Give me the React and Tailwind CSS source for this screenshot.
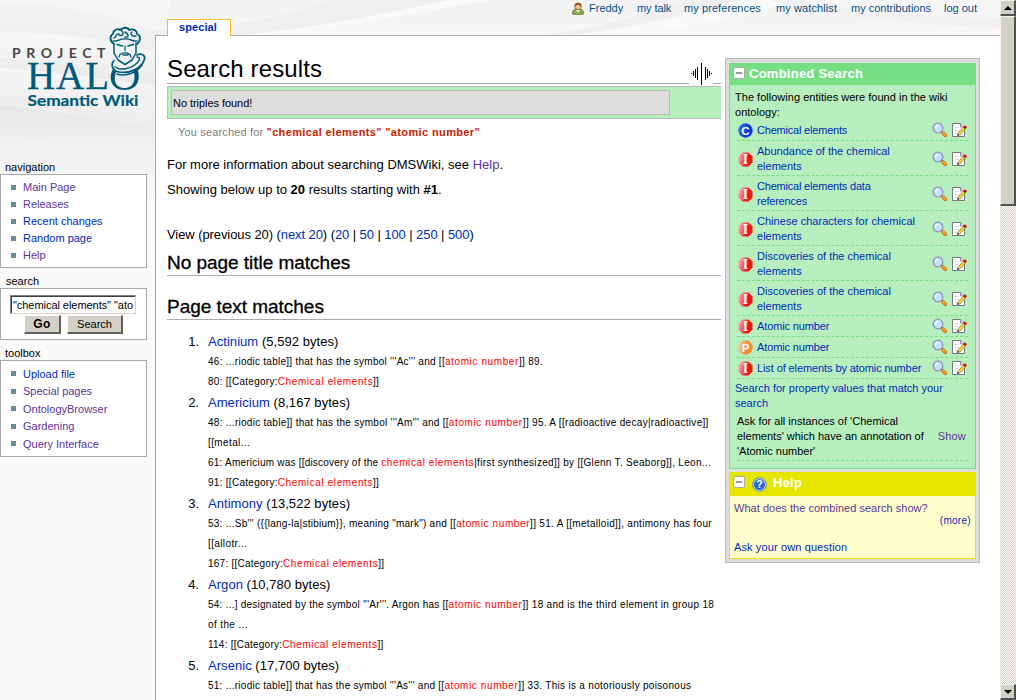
import React from "react";

const results = [
  {
    title: "Actinium",
    size: "5,592",
    lines: [
      ["46: ...riodic table]] that has the symbol '''Ac''' and [[", "atomic number", "]] 89.", "tracking-[0.26px]"],
      ["80: [[Category:", "Chemical elements", "]]", "tracking-[0.28px]"],
    ],
  },
  {
    title: "Americium",
    size: "8,167",
    lines: [
      ["48: ...riodic table]] that has the symbol '''Am''' and [[", "atomic number", "]] 95. A [[radioactive decay|radioactive]]", "tracking-[0.27px]"],
      ["[[metal...", "", "", "tracking-[0.38px]"],
      ["61: Americium was [[discovery of the ", "chemical elements", "|first synthesized]] by [[Glenn T. Seaborg]], Leon...", "tracking-[0.22px]"],
      ["91: [[Category:", "Chemical elements", "]]", "tracking-[0.28px]"],
    ],
  },
  {
    title: "Antimony",
    size: "13,522",
    lines: [
      ["53: ...Sb''' ({{lang-la|stibium}}, meaning \"mark\") and [[", "atomic number", "]] 51. A [[metalloid]], antimony has four", "tracking-[0.25px]"],
      ["[[allotr...", "", "", "tracking-[0.38px]"],
      ["167: [[Category:", "Chemical elements", "]]", "tracking-[0.24px]"],
    ],
  },
  {
    title: "Argon",
    size: "10,780",
    lines: [
      ["54: ...] designated by the symbol '''Ar'''. Argon has [[", "atomic number", "]] 18 and is the third element in group 18", "tracking-[0.24px]"],
      ["of the ...", "", "", "tracking-[0.38px]"],
      ["114: [[Category:", "Chemical elements", "]]", "tracking-[0.24px]"],
    ],
  },
  {
    title: "Arsenic",
    size: "17,700",
    lines: [
      ["51: ...riodic table]] that has the symbol '''As''' and [[", "atomic number", "]] 33. This is a notoriously poisonous", "tracking-[0.25px]"],
    ],
  },
];

const entities = [
  ["C", ["Chemical elements"], "tracking-[-0.2px]"],
  ["I", ["Abundance of the chemical", "elements"], "tracking-[0px]"],
  ["I", ["Chemical elements data", "references"], "tracking-[-0.2px]"],
  ["I", ["Chinese characters for chemical", "elements"], "tracking-[0.03px]"],
  ["I", ["Discoveries of the chemical", "elements"], "tracking-[0px]"],
  ["I", ["Discoveries of the chemical", "elements"], "tracking-[0px]"],
  ["I", ["Atomic number"], "tracking-[-0.12px]"],
  ["P", ["Atomic number"], "tracking-[-0.12px]"],
  ["I", ["List of elements by atomic number"], "tracking-[-0.1px]"],
];

function Backdrop() {
  return (
    <svg className="absolute left-0 top-0" width="1000" height="200" viewBox="0 0 1000 200" aria-hidden="true">
      <defs>
        <linearGradient id="base" x1="0" y1="0" x2="0" y2="1">
          <stop offset="0" stopColor="#f3f3f3" />
          <stop offset="0.4" stopColor="#ebebeb" />
          <stop offset="0.7" stopColor="#f0f0f0" />
          <stop offset="1" stopColor="#f9f9f9" />
        </linearGradient>
        <linearGradient id="sheet" x1="0" y1="0" x2="0" y2="1">
          <stop offset="0" stopColor="#ffffff" stopOpacity="0.55" />
          <stop offset="1" stopColor="#ffffff" stopOpacity="0" />
        </linearGradient>
        <linearGradient id="shade" x1="0" y1="0" x2="0" y2="1">
          <stop offset="0" stopColor="#dadada" stopOpacity="0.4" />
          <stop offset="1" stopColor="#f4f4f4" stopOpacity="0" />
        </linearGradient>
        <linearGradient id="rise" x1="0" y1="0" x2="0" y2="1">
          <stop offset="0" stopColor="#f2f2f2" />
          <stop offset="1" stopColor="#f8f8f8" />
        </linearGradient>
      </defs>
      <rect width="1000" height="200" fill="url(#base)" />
      <path d="M156 0H1000V36H156z" fill="url(#rise)" />
      <path d="M0 2C60 4 110 14 170 36V0H0z" fill="#f6f6f6" />
      <path d="M0 32C60 32 110 40 160 52V84C100 70 50 60 0 58z" fill="url(#sheet)" />
      <path d="M0 68C60 72 110 80 160 86V120C100 104 60 98 0 96z" fill="url(#sheet)" />
      <path d="M0 106C60 110 110 122 160 128V165C100 150 50 140 0 136z" fill="url(#shade)" />
      <path d="M235 36C320 28 400 8 460 0H330C290 14 260 25 156 31V36z" fill="#efefef" />
      <path d="M250 36C340 30 430 10 490 0H450C400 10 330 28 235 36z" fill="#fafafa" />
      <path d="M560 36C630 30 690 12 735 0H690C650 12 610 26 540 36z" fill="#efefef" />
      <path d="M600 36C680 32 750 14 800 0H740C700 12 650 28 575 36z" fill="#fafafa" />
      <path d="M770 0C820 14 900 24 1000 28V0z" fill="#f1f1f1" />
      <path d="M800 0C860 12 920 16 1000 18V0z" fill="#f6f6f6" />
    </svg>
  );
}

function Logo() {
  return (
    <svg width="155" height="115" viewBox="0 0 155 115" className="block">
      <text x="12" y="58" fontFamily="Lato, sans-serif" fontWeight="700" fontSize="14" fill="#4a4444" textLength="93.500">PROJECT</text>
      <text x="27" y="89" fontFamily="Liberation Serif, serif" fontSize="39" fill="#005b7a" stroke="#005b7a" strokeWidth="0.3" textLength="82">HAL</text>
      <text x="27.500" y="106" fontFamily="Lato, sans-serif" fontWeight="700" fontSize="16" fill="#005b7a" stroke="#005b7a" strokeWidth="0.2" textLength="111" lengthAdjust="spacingAndGlyphs">Semantic Wiki</text>
      <path fillRule="evenodd" fill="#005b7a" d="M113 69C108.500 76 110 90 124.500 90S141 77 137 68.500L133.500 71C136 78 134.500 88 124.500 88S113 78 116.500 71z" />
      <g fill="none" stroke="#005b7a" strokeLinecap="round" strokeLinejoin="round">
        <path d="M137 55C141 53 145.500 55 144.500 59C142 68 130 74 119 72C112 71 110.500 64 114 60.500" strokeWidth="1.700" />
        <path d="M137 57C140.500 57 140 60 137 63C131 69 120 71 115 67" strokeWidth="1.500" />
        <path d="M117 74C127 77 137 72 142 65" strokeWidth="1.500" />
        <path d="M114 44C109 41 110 35 113 34C113 30 118 28 120 30C123 27 128 27 129 30C134 28 137 31 137 34C141 35 141 41 137 44" strokeWidth="1.800" />
        <path d="M114 38C117 36 116 33 119 34M121 30C125 33 122 37 119 35M125 32C129 34 129 38 125 37M132 32C129 34 133 37 136 36M113 41C119 42 120 38 125 39C130 38 132 42 137 41" strokeWidth="1.400" />
        <path d="M114 44V53L118 60L125 64.500L132 60L136 53V43" strokeWidth="1.500" />
        <path d="M117 44.500L122.500 46M128 46L133.500 44.500" strokeWidth="1.600" />
        <path d="M125 46V50.500M119 57C120 51.500 130 51.500 131 57M123 55H128" strokeWidth="1.300" />
      </g>
    </svg>
  );
}

function UserIcon() {
  return (
    <svg width="12" height="13" viewBox="0 0 12 13" className="block">
      <path d="M.7 12.300V9.500Q1 7.600 4 7.500H8Q11 7.600 11.300 9.500V12.300z" fill="#8db04a" stroke="#586f2e" strokeWidth=".8" />
      <path d="M4 8L6 10.500L8 8z" fill="#fff" />
      <circle cx="6" cy="4.500" r="3.300" fill="#f3bd85" stroke="#8a5427" strokeWidth=".8" />
      <path d="M2.600 4Q2.500.8 6 .7T9.400 4Q7 3.500 6 2.800 4.500 3.800 2.600 4z" fill="#8d5323" />
    </svg>
  );
}

function EntityIcon({ kind }) {
  const dark = { C: "#0a3bd0", I: "#f01414", P: "#f08a2c" }[kind];
  const light = { C: "#2f7bff", I: "#ffc0c0", P: "#ffd2a0" }[kind];
  const serif = kind === "I";
  return (
    <svg width="15" height="15" viewBox="0 0 15 15" className="block">
      <defs>
        <linearGradient id={"ent" + kind} x1="0" y1="0" x2="1" y2="0.3">
          <stop offset="0" stopColor={light} />
          <stop offset="0.75" stopColor={dark} />
        </linearGradient>
      </defs>
      {serif ? (
        <path d="M4.500.5H10.500L14.500 4.500V10.500L10.500 14.500H4.500L.5 10.500V4.500z" fill={"url(#ent" + kind + ")"} />
      ) : (
        <circle cx="7.500" cy="7.500" r="7.200" fill={"url(#ent" + kind + ")"} />
      )}
      <text x="7.500" y={serif ? "12" : "11.500"} textAnchor="middle" fontFamily={serif ? "Liberation Serif, serif" : "Liberation Sans, sans-serif"} fontWeight="700" fontSize={serif ? 14 : 11.5} fill="#fff">{kind}</text>
    </svg>
  );
}

function Magnifier() {
  return (
    <svg width="16" height="16" viewBox="0 0 16 16" className="block">
      <path d="M9 9L11 11" stroke="#777" strokeWidth="2" />
      <path d="M11 11L13.300 13.300" stroke="#c9680f" strokeWidth="3.600" strokeLinecap="round" />
      <path d="M11 10.700L13.200 12.900" stroke="#ff9a2e" strokeWidth="2.200" strokeLinecap="round" />
      <circle cx="6" cy="6" r="4.800" fill="#c5e0ff" stroke="#8795bb" strokeWidth="1.300" />
      <path d="M3.500 6Q3.500 3.500 6 3.300" stroke="#fff" strokeWidth="1.300" fill="none" />
    </svg>
  );
}

function EditIcon() {
  return (
    <svg width="16" height="16" viewBox="0 0 16 16" className="block">
      <path d="M.5 1.500H8.500L12.500 5V14.500H.5z" fill="#fff" stroke="#77777f" />
      <path d="M8.500 1.500V5H12.500" fill="#e4e4ea" stroke="#77777f" strokeWidth=".8" />
      <path d="M3 5.500H7M3 8.500H7M3 11.500H5" stroke="#d4d8de" />
      <path d="M7 12L12.500 6" stroke="#7a6614" strokeWidth="3.200" />
      <path d="M7 12L12.500 6" stroke="#ffd83a" strokeWidth="2.100" />
      <path d="M12 6.300L14 4.200" stroke="#c51616" strokeWidth="3" />
      <path d="M5 14L5.500 11.200 7.800 13.300z" fill="#3a3520" />
    </svg>
  );
}

function Collapse() {
  return (
    <svg width="12" height="12" viewBox="0 0 12 12" className="block">
      <rect x=".5" y=".5" width="11" height="11" rx="1.500" fill="#fff" stroke="#aaa" />
      <path d="M3 6H9" stroke="#999" strokeWidth="2" />
    </svg>
  );
}

function HelpIcon() {
  return (
    <svg width="15" height="15" viewBox="0 0 15 15" className="block">
      <circle cx="7.500" cy="7.500" r="6.800" fill="#dfe9f7" stroke="#5d80b8" />
      <circle cx="7.500" cy="7.500" r="5.500" fill="#2c66cf" />
      <text x="7.500" y="11.300" textAnchor="middle" fontFamily="Liberation Sans, sans-serif" fontWeight="700" fontSize="10.500" fill="#fff">?</text>
    </svg>
  );
}

function SplitHandle() {
  return (
    <svg width="24" height="22" viewBox="0 0 24 22" className="block bg-white" shapeRendering="crispEdges">
      <path d="M12.500 0V22M8.500 4V17M6.500 6V15M4.500 8V13M2.500 10V11M16.500 4V17M18.500 6V15M20.500 8V13M22.500 10V11" stroke="#000" />
    </svg>
  );
}

function Portlet({ label, labelClass, boxClass, children }) {
  return (
    <section>
      <h5 className={"text-[11px] leading-[14px] text-black " + labelClass}>{label}</h5>
      <div className={"w-[147px] border border-[#aaa] bg-white " + boxClass}>{children}</div>
    </section>
  );
}

function LinkList({ items, rowClass }) {
  return (
    <ul>
      {items.map(([name, visited]) => (
        <li key={name} className={"flex items-center gap-[7px] pl-[10px] " + rowClass}>
          <span className="h-[5px] w-[5px] bg-[#638c9c]" />
          <a className={visited ? "text-[#5a3696]" : "text-[#002bb8]"}>{name}</a>
        </li>
      ))}
    </ul>
  );
}

function Sidebar() {
  return (
    <aside className="flex w-[155px] shrink-0 flex-col text-[11px]">
      <div className="h-[160px]"><Logo /></div>
      <Portlet label="navigation" labelClass="pl-[5px]" boxClass="h-[94px] pt-[4px]">
        <LinkList rowClass="h-[17px]" items={[["Main Page", true], ["Releases", true], ["Recent changes", false], ["Random page", false], ["Help", true]]} />
      </Portlet>
      <div className="pt-[6px]">
        <Portlet label="search" labelClass="pl-[6px]" boxClass="h-[52px] pt-[6px]">
          <div className="ml-[9px] h-[19px] w-[126px] border border-b-[#d4d0c8] border-l-[#808080] border-r-[#d4d0c8] border-t-[#808080] bg-white text-[11px]">
            <div className="h-[17px] whitespace-nowrap border-l border-t border-[#404040] pl-[1px] leading-[17px] tracking-[-0.05px]">"chemical elements" "ato</div>
          </div>
          <div className="flex gap-[6px] pl-[23px] pt-[1px]">
            <button className="h-[19px] w-[37px] border-b-2 border-r-2 border-b-[#606060] border-r-[#606060] border-l border-t border-l-white border-t-white bg-[#d4d0c8] text-[12px] font-bold leading-[15px] tracking-[0.3px]">Go</button>
            <button className="h-[19px] w-[56px] border-b-2 border-r-2 border-b-[#606060] border-r-[#606060] border-l border-t border-l-white border-t-white bg-[#d4d0c8] text-[11px] leading-[15px]">Search</button>
          </div>
        </Portlet>
      </div>
      <div className="pt-[6px]">
        <Portlet label="toolbox" labelClass="pl-[5px]" boxClass="h-[97px] pt-[4px]">
          <LinkList rowClass="h-[17.5px]" items={[["Upload file", false], ["Special pages", true], ["OntologyBrowser", true], ["Gardening", true], ["Query Interface", true]]} />
        </Portlet>
      </div>
    </aside>
  );
}

function TopBar() {
  return (
    <div className="flex h-[35px] justify-between pl-[12px]">
      <div className="z-10 mt-[19px] h-[17px] w-[64px] border-x border-t border-[#fabd23] bg-white pr-[2px] text-center text-[11px] font-bold leading-[15px] tracking-[0.1px] text-[#002bb8]">special</div>
      <nav className="flex h-[16px] items-center pr-[24px] text-[11px] text-[#005189]">
        <UserIcon />
        <a className="ml-[5px] w-[48px] whitespace-nowrap">Freddy</a>
        <a className="w-[47px] whitespace-nowrap tracking-[-0.1px]">my talk</a>
        <a className="w-[92px] whitespace-nowrap tracking-[0.08px]">my preferences</a>
        <a className="w-[75px] whitespace-nowrap tracking-[0.1px]">my watchlist</a>
        <a className="w-[93px] whitespace-nowrap">my contributions</a>
        <a className="w-[32px] whitespace-nowrap">log out</a>
      </nav>
    </div>
  );
}

function Results() {
  return (
    <main className="w-[554px] shrink-0 text-[13px] text-black">
      <div className="flex h-[48px] items-end border-b border-[#aaa]">
        <h1 className="flex-1 text-[24px] leading-[29px] tracking-[0.12px]">Search results</h1>
        <div className="mr-[8px] -mb-[2px]"><SplitHandle /></div>
      </div>
      <div className="mt-[2px] h-[33px] border-y border-l border-[#bbb] bg-[#b7eebe] py-[3px] pl-[3px]">
        <div className="h-[25px] w-[499px] border border-[#bbb] bg-[#ddd] pl-[1px] text-[11px] leading-[24px] tracking-[-0.05px]">No triples found!</div>
      </div>
      <p className="mt-[5px] pl-[11px] text-[11px] leading-[16px] text-[#7d7d7d]">
        <span className="tracking-[0.16px]">You searched for </span>
        <b className="tracking-[0.37px] text-[#c20]">"chemical elements" "atomic number"</b>
      </p>
      <p className="mt-[16px] leading-[18px]">For more information about searching DMSWiki, see <a className="text-[#5a3696]">Help</a>.</p>
      <p className="mt-[7px] leading-[18px]">Showing below up to <b>20</b> results starting with <b>#1</b>.</p>
      <p className="mt-[27px] leading-[18px] tracking-[-0.08px]">
        View (previous 20) (<a className="text-[#002bb8]">next 20</a>) (<a className="text-[#002bb8]">20</a> | <a className="text-[#002bb8]">50</a> | <a className="text-[#002bb8]">100</a> | <a className="text-[#002bb8]">250</a> | <a className="text-[#002bb8]">500</a>)
      </p>
      <h2 className="mt-[7px] h-[25px] border-b border-[#aaa] text-[19px] leading-[24px] tracking-[-0.03px] [-webkit-text-stroke:0.3px_black]">No page title matches</h2>
      <h2 className="mt-[19px] h-[25px] border-b border-[#aaa] text-[19px] leading-[24px] tracking-[-0.03px] [-webkit-text-stroke:0.3px_black]">Page text matches</h2>
      <ol className="mt-[11px]">
        {results.map((r, i) => (
          <li key={r.title} className="flex">
            <span className="w-[32px] shrink-0 text-right leading-[21px]">{i + 1}.</span>
            <div className="whitespace-nowrap pl-[9px]">
              <div className="h-[21px] leading-[21px] tracking-[0.05px]"><a className="text-[#002bb8]">{r.title}</a> ({r.size} bytes)</div>
              {r.lines.map(([a, b, c, track]) => (
                <div key={a} className="h-[20px] text-[10px] leading-[19px]">
                  <span className={track}>{a}</span>
                  <span className="tracking-[0.6px] text-[#f00]">{b}</span>
                  <span className="tracking-[0.3px]">{c}</span>
                </div>
              ))}
            </div>
          </li>
        ))}
      </ol>
    </main>
  );
}

function CombinedSearch() {
  return (
    <section>
      <header className="flex h-[22px] bg-[#76df83] pl-[4px]">
        <span className="pt-[4px]"><Collapse /></span>
        <h3 className="ml-[4px] text-[13px] font-bold leading-[21px] tracking-[0.25px] text-white">Combined Search</h3>
      </header>
      <div className="h-[384px] border-x border-b border-[#76df83] bg-[#b7eebe] pt-[5px]">
        <p className="whitespace-nowrap pl-[5px] leading-[15px] tracking-[0.02px]">The following entities were found in the wiki<br />ontology:</p>
        <div className="ml-[7px] w-[231px]">
          {entities.map(([kind, lines, track], i) => (
            <div key={i} className={"flex items-center border-b border-dashed border-[#76df83] " + (lines.length === 2 ? "h-[35px] pt-[2px]" : "h-[21px]")}>
              <span className="pl-[1px]"><EntityIcon kind={kind} /></span>
              <a className={"ml-[4px] flex-1 whitespace-nowrap leading-[15px] text-[#002bb8] " + track}>
                {lines.map((l) => <span key={l} className="block">{l}</span>)}
              </a>
              <span className="pr-[4px]"><Magnifier /></span>
              <EditIcon />
            </div>
          ))}
        </div>
        <p className="whitespace-nowrap pl-[5px] pt-[2px] leading-[15px] text-[#002bb8]">Search for property values that match your<br />search</p>
        <div className="ml-[7px] mt-[3px] flex h-[47px] w-[231px] items-center border-b border-dashed border-[#76df83] pb-[1px] leading-[15px]">
          <p className="flex-1 whitespace-nowrap">Ask for all instances of 'Chemical<br />elements' which have an annotation of<br />'Atomic number'</p>
          <a className="pr-[2px] tracking-[0.2px] text-[#5a3696]">Show</a>
        </div>
      </div>
    </section>
  );
}

function HelpPanel() {
  return (
    <section className="mt-[3px]">
      <header className="flex h-[24px] bg-[#e6e600] pl-[4px]">
        <span className="pt-[4px]"><Collapse /></span>
        <span className="pl-[7px] pt-[5px]"><HelpIcon /></span>
        <h3 className="ml-[6px] text-[13px] font-bold leading-[22px] tracking-[0.25px] text-white">Help</h3>
      </header>
      <div className="h-[63px] border-x border-b border-[#e6e600] bg-[#ffc] pl-[4px] pt-[5px]">
        <a className="block leading-[15px] tracking-[0.03px] text-[#5a3696]">What does the combined search show?</a>
        <a className="block pr-[4px] text-right text-[10px] leading-[10px] tracking-[0.3px] text-[#002bb8]">(more)</a>
        <a className="block pt-[14px] leading-[15px] tracking-[0.12px] text-[#002bb8]">Ask your own question</a>
      </div>
    </section>
  );
}

function Scrollbar() {
  const bevel = "border-b-2 border-r-2 border-b-[#505050] border-r-[#505050] border-l border-t border-l-[#f4f2ee] border-t-[#f4f2ee] bg-[#d4d0c8]";
  return (
    <div className="flex h-[700px] w-[16px] shrink-0 flex-col bg-[#e9e7e3] bg-[repeating-conic-gradient(#d4d0c8_0_25%,#ffffff_0_50%)] bg-[length:2px_2px]">
      <div className={"flex h-[16px] items-center justify-center " + bevel}>
        <svg width="8" height="4" viewBox="0 0 8 4"><path d="M0 4L4 0L8 4z" /></svg>
      </div>
      <div className={"h-[190px] " + bevel} />
      <div className={"mt-auto flex h-[16px] items-center justify-center " + bevel}>
        <svg width="8" height="4" viewBox="0 0 8 4"><path d="M0 0L4 4L8 0z" /></svg>
      </div>
    </div>
  );
}

export default function App() {
  return (
    <div className="flex h-[700px] w-[1016px] overflow-hidden bg-[#f9f9f9] font-['Liberation_Sans',Arial,sans-serif]">
      <div className="relative flex w-[1000px] shrink-0">
        <Backdrop />
        <div className="relative flex w-full">
          <Sidebar />
          <div className="flex h-[700px] min-w-0 flex-1 flex-col">
            <TopBar />
            <div className="flex min-h-0 flex-1 items-start overflow-hidden border-l border-t border-[#aaa] bg-white pl-[11px]">
              <Results />
              <aside className="ml-[4px] mt-[22px] h-[505px] w-[255px] shrink-0 border border-[#bbb] bg-[#ddd] px-[3px] pt-[4px] text-[11px] text-black">
                <CombinedSearch />
                <HelpPanel />
              </aside>
            </div>
          </div>
        </div>
      </div>
      <Scrollbar />
    </div>
  );
}
